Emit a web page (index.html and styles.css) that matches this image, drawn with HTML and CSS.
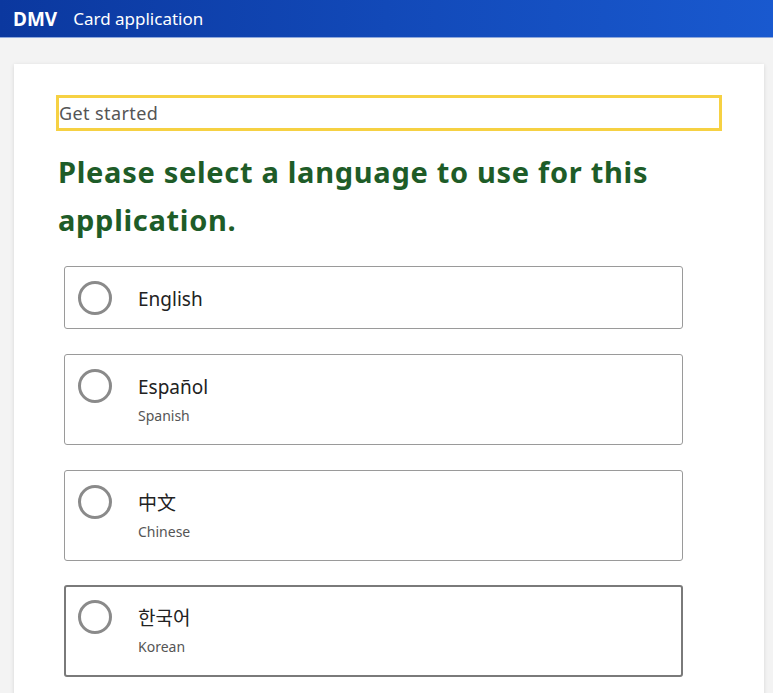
FILE: index.html
```html
<!DOCTYPE html>
<html lang="en">
<head>
  <meta charset="UTF-8">
  <meta name="viewport" content="width=device-width, initial-scale=1.0">
  <title>DMV Card application</title>
  <link rel="stylesheet" href="styles.css">
</head>
<body>

<header class="topbar">
  <span class="brand">DMV</span>
  <span class="app-title">Card application</span>
</header>

<main class="card">
  <div class="step">Get started</div>
  <h1 class="question">Please select a language to use for this application.</h1>

  <div class="options">
    <label class="option">
      <span class="radio"></span>
      <span class="option-text">
        <span class="option-label">English</span>
      </span>
    </label>
    <label class="option">
      <span class="radio"></span>
      <span class="option-text">
        <span class="option-label">Español</span>
        <span class="option-sub">Spanish</span>
      </span>
    </label>
    <label class="option">
      <span class="radio"></span>
      <span class="option-text">
        <span class="option-label" lang="zh">中文</span>
        <span class="option-sub">Chinese</span>
      </span>
    </label>
    <label class="option active">
      <span class="radio"></span>
      <span class="option-text">
        <span class="option-label" lang="ko">한국어</span>
        <span class="option-sub">Korean</span>
      </span>
    </label>
  </div>
</main>

</body>
</html>
```

FILE: styles.css
```css
body {
  font-family: "Noto Sans", "Noto Sans CJK KR", sans-serif;
  background-color: #f3f3f3;
  margin: 0;
  padding: 0;
  color: #222;
}
.topbar {
  height: 37px;
  display: flex;
  align-items: center;
  padding-left: 13px;
  background: linear-gradient(90deg, #0b389f 0%, #1249b8 50%, #1959cf 100%);
  border-bottom: 1px solid #8ea8dc;
  color: white;
}
.brand {
  font-weight: bold;
  font-size: 19px;
  margin-right: 16px;
}
.app-title {
  font-size: 17px;
}
.card {
  background: white;
  margin: 26px 9px 0 14px;
  padding: 31px 42px 20px;
  box-shadow: 0 1px 4px rgba(0, 0, 0, 0.12);
  min-height: 600px;
}
.step {
  border: 3px solid #f6d143;
  font-size: 18px;
  letter-spacing: 0.4px;
  color: #555;
  height: 29px;
  line-height: 29px;
  padding-top: 1px;
  padding-left: 0;
}
.question {
  color: #1e5c28;
  font-size: 29px;
  line-height: 48px;
  font-weight: bold;
  margin: 17px 0 22px 2px;
  letter-spacing: 0.7px;
}
.options {
  width: 619px;
  margin-left: 8px;
  display: flex;
  flex-direction: column;
  gap: 25px;
}
.option {
  display: flex;
  align-items: flex-start;
  border: 1px solid #9a9a9a;
  border-radius: 3px;
  padding: 14px 13px 13px;
}
.option.active {
  border: 2px solid #7a7a7a;
  padding: 13px 12px 13px;
  margin-top: -1px;
}
.radio {
  width: 28px;
  height: 28px;
  border: 3px solid #8a8a8a;
  border-radius: 50%;
  flex-shrink: 0;
}
.option-text {
  display: flex;
  flex-direction: column;
  margin-left: 26px;
  padding-top: 5px;
}
.option-label {
  font-size: 19px;
  line-height: 26px;
  color: #222;
}
.option-sub {
  font-size: 14px;
  line-height: 20px;
  color: #555;
  margin-top: 6px;
  margin-bottom: 5px;
}
```
